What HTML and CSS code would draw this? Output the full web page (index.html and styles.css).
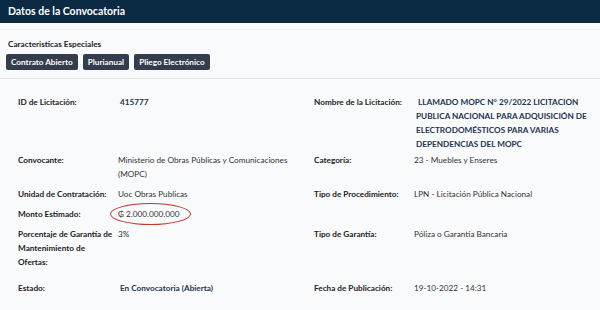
FILE: index.html
```html
<!DOCTYPE html>
<html>
	<head>
		<meta charset="utf-8" />
		<meta name="viewport" content="width=device-width" />
		<title>Datos de la Convocatoria</title>
<link rel="stylesheet" href="styles.css">
	</head>
	<body>
		<div class="panel-head">Datos de la Convocatoria</div>

		<div class="features">
			<h4>Caracteristicas Especiales</h4>
			<div class="badges">
				<span class="badge">Contrato Abierto</span>
				<span class="badge">Plurianual</span>
				<span class="badge">Pliego Electrónico</span>
			</div>
		</div>

		<div class="details">
			<div class="label">ID de Licitación:</div>
			<div class="value strong">415777</div>
			<div class="label">Nombre de la Licitación:</div>
			<div class="value strong title">&nbsp;LLAMADO MOPC N° 29/2022 LICITACION PUBLICA NACIONAL PARA ADQUISICIÓN DE ELECTRODOMÉSTICOS PARA VARIAS DEPENDENCIAS DEL MOPC</div>

			<div class="label">Convocante:</div>
			<div class="value">Ministerio de Obras Públicas y Comunicaciones (MOPC)</div>
			<div class="label">Categoría:</div>
			<div class="value">23 - Muebles y Enseres</div>

			<div class="label">Unidad de Contratación:</div>
			<div class="value">Uoc Obras Publicas</div>
			<div class="label">Tipo de Procedimiento:</div>
			<div class="value">LPN - Licitación Pública Nacional</div>

			<div class="label">Monto Estimado:</div>
			<div class="value"><span class="circled">₲ 2.000.000.000</span></div>
			<div class="label"></div>
			<div class="value"></div>

			<div class="label">Porcentaje de Garantía de Mantenimiento de<br>Ofertas:</div>
			<div class="value">3%</div>
			<div class="label">Tipo de Garantía:</div>
			<div class="value">Póliza o Garantía Bancaria</div>

			<div class="label last">Estado:</div>
			<div class="value strong last">En Convocatoria (Abierta)</div>
			<div class="label last">Fecha de Publicación:</div>
			<div class="value last">19-10-2022 - 14:31</div>
		</div>
	</body>
</html>
```

FILE: styles.css
```css
body {
	margin: 0;
	font-family: Lato, "Liberation Sans", sans-serif;
	color: #222;
	background: #f9fafb;
	width: 600px;
	height: 310px;
	overflow: hidden;
}
.panel-head {
	background: #0b2a44;
	color: #fff;
	font-weight: bold;
	font-size: 10.5px;
	height: 22px;
	line-height: 22px;
	padding: 0 8px;
	border-bottom: 1px solid #1d2226;
}
.features {
	margin-top: 6px;
	background: #f9fafc;
	border-top: 1px solid #eceef0;
	border-bottom: 1px solid #e3e5e8;
	padding: 9px 6px 8px;
}
.features h4 {
	margin: 0 0 5px;
	padding-left: 2px;
	font-size: 8.2px;
	font-weight: bold;
	color: #222;
	line-height: 10px;
}
.badges {
	display: flex;
	gap: 5px;
}
.badge {
	background: #343d4d;
	color: #fff;
	font-size: 8.2px;
	font-weight: bold;
	padding: 0 5px;
	height: 16px;
	line-height: 16px;
	border-radius: 2px;
}
.details {
	display: grid;
	grid-template-columns: 100px 196px 100px 1fr;
	row-gap: 6px;
	padding: 16px 8px 0 18px;
	font-size: 8.2px;
	line-height: 14px;
}
.label {
	font-weight: bold;
}
.value {
	color: #333;
}
.strong {
	font-weight: bold;
	color: #1c3451;
	padding-left: 2px;
}
.title {
	margin-bottom: -4px;
}
.last {
	margin-top: 6px;
}
.circled {
	position: relative;
}
.circled::after {
	content: "";
	position: absolute;
	left: -8px;
	right: -12px;
	top: -6px;
	bottom: -6px;
	border: 1.5px solid #c2392f;
	border-radius: 50%;
}
```
